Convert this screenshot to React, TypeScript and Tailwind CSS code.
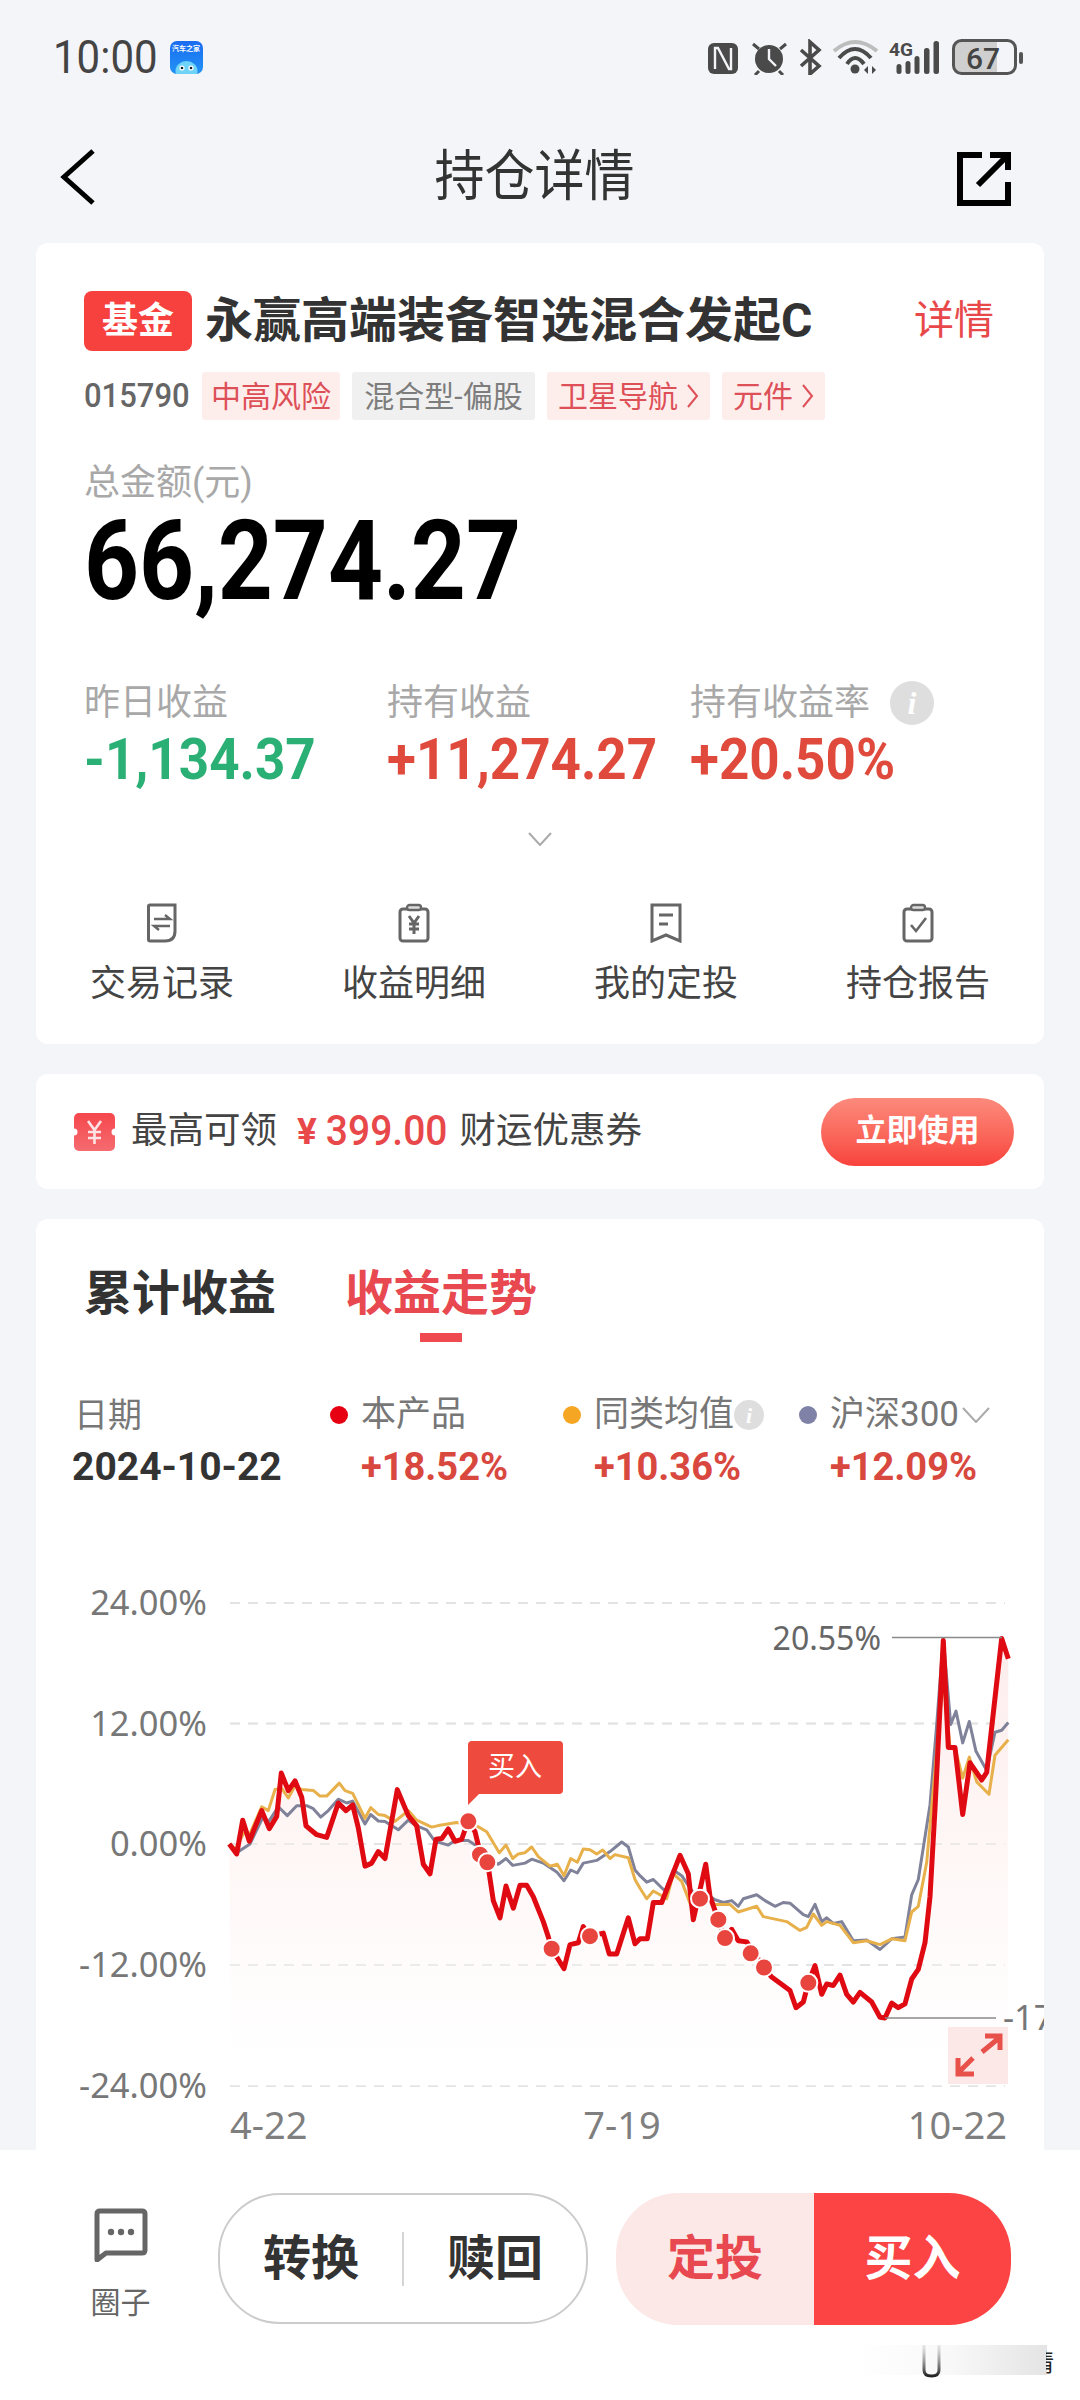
const sx = (x: number) => 200 + x / 3;
const sy = (y: number) => 1560 + y / 2.6133;

// 坐标取自参考图放大后的读数,右半段加 1320 接上
const toPoints = (left: number[], right: number[]) => {
  const all = [...left];
  for (let i = 0; i < right.length; i += 2) all.push(right[i] + 1320, right[i + 1]);
  const out: string[] = [];
  for (let i = 0; i < all.length; i += 2) out.push(`${sx(all[i]).toFixed(1)},${sy(all[i + 1]).toFixed(1)}`);
  return out.join(" ");
};

const redLine = toPoints(
  [88,742,110,768,128,680,148,735,185,655,208,702,230,670,244,557,265,603,285,577,305,620,318,695,350,718,380,725,415,635,438,655,458,640,475,700,495,800,515,792,535,762,555,780,592,600,625,668,650,695,670,795,690,820,708,730,725,728,745,703,765,735,785,730,793,710,805,683,825,710,835,745,862,790,868,820,880,890,900,935,918,852,940,910,960,850,980,850,1000,880,1030,945,1045,985,1055,1016,1092,1068,1110,1005,1135,1000,1150,958,1170,983,1210,975,1228,1030,1250,1030,1285,935,1305,1003,1320,990],
  [22,990,40,895,65,895,120,772,145,820,160,940,197,795,210,880,235,940,255,988,275,965,295,995,320,998,372,1065,395,1090,450,1125,468,1170,490,1155,505,1105,525,1060,545,1135,560,1108,580,1112,600,1085,620,1135,640,1155,660,1130,695,1155,720,1195,735,1197,755,1158,775,1170,795,1160,815,1095,835,1070,855,1000,870,880,885,650,910,210,925,490,945,490,968,665,990,530,1025,575,1040,555,1060,400,1085,205,1105,258],
);
const orangeLine = toPoints(
  [88,742,108,755,130,715,150,715,185,645,205,655,225,600,245,597,265,622,285,590,305,600,340,602,360,617,380,617,418,583,435,603,458,610,495,675,512,647,535,665,555,668,585,683,625,655,650,680,695,698,715,694,770,686,830,695,860,710,898,765,918,745,938,780,955,768,975,765,995,750,1015,775,1050,800,1072,795,1092,825,1112,780,1132,790,1150,755,1170,757,1190,768,1208,758,1230,780,1245,770,1285,778,1305,835,1320,858],
  [20,885,40,865,60,875,80,885,100,820,125,840,160,920,195,880,225,900,270,900,295,920,350,905,370,932,440,945,480,968,500,960,520,925,545,955,560,945,600,955,640,1000,680,995,720,1005,755,990,795,995,815,920,835,905,860,790,885,550,910,310,930,490,945,490,968,570,988,515,1010,580,1047,612,1065,510,1105,470],
);
const greyLine = toPoints(
  [88,745,110,765,150,742,190,670,205,685,235,645,262,668,290,642,320,642,340,650,362,672,385,655,415,625,440,635,458,630,495,690,512,665,535,682,555,683,595,705,625,680,650,695,680,705,705,735,745,745,765,733,805,733,835,750,862,775,895,795,918,780,938,798,975,792,995,782,1030,792,1070,815,1092,838,1112,810,1132,818,1150,792,1190,785,1230,762,1265,737,1285,750,1305,810,1320,825],
  [20,842,40,835,75,865,100,810,125,825,160,870,195,870,225,888,250,895,275,890,295,905,310,885,350,875,375,890,405,905,430,895,450,897,490,927,505,932,525,900,545,945,560,935,580,950,605,945,640,995,680,993,720,1018,755,990,795,985,815,875,835,835,870,640,890,430,910,205,932,430,948,395,968,478,988,422,1008,500,1040,550,1065,450,1085,445,1105,425],
);
const buyDots = [[805,683],[840,770],[862,790],[1055,1016],[1170,983],[1500,885],[1555,940],[1575,988],[1652,1028],[1692,1065],[1825,1105]];
const grid = [
  { y: 1603, label: "24.00%" },
  { y: 1723.5, label: "12.00%" },
  { y: 1844, label: "0.00%" },
  { y: 1965, label: "-12.00%" },
  { y: 2086, label: "-24.00%" },
];

function StatusIcons() {
  return (
    <svg width="315" height="36" viewBox="0 0 315 36" fill="none">
      <rect x="0" y="4" width="30" height="31" rx="6" fill="#4a4a4a" />
      <path d="M7 30V9h3l11 21h2V9" stroke="#f4f5f9" strokeWidth="2.4" />
      <circle cx="61" cy="20" r="14" fill="#4a4a4a" />
      <path d="M61 10v10l7 7" stroke="#f4f5f9" strokeWidth="2.4" />
      <path d="M45 5l6 5M78 5l-6 5M47 36l4-4M75 36l-4-4" stroke="#4a4a4a" strokeWidth="3" />
      <path d="M93 11l18 16-9 8V3l9 8-18 16" stroke="#4a4a4a" strokeWidth="3.6" />
      <path d="M126 12Q147-6 169 12" stroke="#bdbdbd" strokeWidth="4" />
      <path d="M131 19Q147 1 163 19" stroke="#4a4a4a" strokeWidth="4" />
      <path d="M139 25Q147 13 156 25" stroke="#4a4a4a" strokeWidth="4" />
      <circle cx="147" cy="30" r="4.5" fill="#4a4a4a" />
      <path d="M160 27v8l-4-4zM164 35v-8l4 4z" fill="#4a4a4a" />
      <text x="181" y="17" fontSize="18" fontWeight="700" fill="#4a4a4a" textLength="24" lengthAdjust="spacingAndGlyphs" fontFamily="Roboto, sans-serif">4G</text>
      <rect x="188.5" y="25" width="5" height="10" rx="2.5" fill="#4a4a4a" />
      <rect x="197.5" y="22" width="5" height="13" rx="2.5" fill="#4a4a4a" />
      <rect x="206.5" y="17" width="5" height="18" rx="2.5" fill="#4a4a4a" />
      <rect x="216" y="9" width="5.5" height="26" rx="2.5" fill="#4a4a4a" />
      <rect x="225.5" y="2" width="5.5" height="33" rx="2.5" fill="#4a4a4a" />
      <path d="M253 3h36v30h-36a6 6 0 0 1-6-6V9a6 6 0 0 1 6-6z" fill="#cfcfcf" />
      <rect x="245.5" y="1.5" width="62" height="33" rx="8" stroke="#555" strokeWidth="3" />
      <text x="275" y="30" textAnchor="middle" fontSize="30" fontWeight="500" fill="#444" fontFamily="Roboto, sans-serif">67</text>
      <rect x="311" y="13" width="4" height="12" rx="2" fill="#555" />
    </svg>
  );
}

function AppIcon() {
  return (
    <div className="w-[33px] h-[33px] rounded-[7px] bg-gradient-to-b from-[#1b6cf0] to-[#2492f5] overflow-hidden flex flex-col items-center">
      <span className="mt-[4px] text-[7px] leading-[9px] font-bold text-white whitespace-nowrap">汽车之家</span>
      <svg width="33" height="20" viewBox="0 0 33 20">
        <ellipse cx="16.5" cy="17" rx="11" ry="10" fill="#6fd3f8" />
        <circle cx="12" cy="14" r="2.6" fill="#fff" />
        <circle cx="21" cy="14" r="2.6" fill="#fff" />
        <circle cx="12" cy="14" r="1.3" fill="#123" />
        <circle cx="21" cy="14" r="1.3" fill="#123" />
      </svg>
    </div>
  );
}

function Tag({ text, width, grey, arrow }: { text: string; width: string; grey?: boolean; arrow?: boolean }) {
  return (
    <div className={`${width} h-[48px] flex items-center justify-center gap-[8px] rounded-[3px] text-[30px] whitespace-nowrap ${grey ? "bg-[#f0f0f0] text-[#7d7d7d]" : "bg-[#fdeeec] text-[#dd5058]"}`}>
      <span>{text}</span>
      {arrow && (
        <svg width="13" height="26" viewBox="0 0 13 26" fill="none">
          <path d="M2 2l9 11-9 11" stroke="#dd5058" strokeWidth="2" />
        </svg>
      )}
    </div>
  );
}

function Stat({ label, value, color, info }: { label: string; value: string; color: string; info?: boolean }) {
  return (
    <div>
      <div className="h-[44px] flex items-center text-[36px] text-[#a8a8a8]">
        {label}
        {info && (
          <span className="ml-[20px] w-[44px] h-[44px] rounded-full bg-[#dedede] flex items-center justify-center text-white text-[32px] font-bold italic font-[Liberation_Serif,serif]">i</span>
        )}
      </div>
      <div className={`mt-[6px] h-[56px] leading-[56px] text-[53px] font-bold whitespace-nowrap scale-y-110 origin-center ${color}`}>{value}</div>
    </div>
  );
}

function ActionIcon({ kind }: { kind: number }) {
  return (
    <svg width="32" height="40" viewBox="0 0 32 40" fill="none" stroke="#666" strokeWidth="3">
      {kind === 0 && (
        <>
          <path d="M4 2h25v26q0 10-10 10H4q-1.500 0-1.500-1.500V3.500Q2.500 2 4 2z" />
          <path d="M8 16h16l-5-4M24 23H8l5 4" strokeWidth="2.4" />
        </>
      )}
      {kind === 1 && (
        <>
          <rect x="2" y="6" width="28" height="32" rx="3" />
          <rect x="9" y="2" width="14" height="5" rx="2.500" fill="#ddd" strokeWidth="2.400" />
          <path d="M11 13l5 7 5-7M16 20v11M11 21h10M11 26h10" strokeWidth="3" />
        </>
      )}
      {kind === 2 && (
        <>
          <path d="M2 2h28v36l-14-6-14 6z" />
          <path d="M9 12h14M9 21h9" />
        </>
      )}
      {kind === 3 && (
        <>
          <rect x="2" y="6" width="28" height="32" rx="3" />
          <rect x="9" y="2" width="14" height="5" rx="2.500" fill="#ddd" strokeWidth="2.400" />
          <path d="M9 22l5 6 10-13" strokeWidth="2.600" />
        </>
      )}
    </svg>
  );
}

function LegendCol({ dot, name, value, width, extra }: { dot: string; name: string; value: string; width: string; extra?: React.ReactNode }) {
  return (
    <div className={width}>
      <div className="h-[40px] flex items-center text-[35px] text-[#777] whitespace-nowrap">
        <span className={`w-[18px] h-[18px] rounded-full mr-[13px] ${dot}`} />
        {name}
        {extra}
      </div>
      <div className="mt-[12px] h-[40px] leading-[40px] pl-[31px] text-[38px] font-bold text-[#d9483e]">{value}</div>
    </div>
  );
}

function Chart() {
  return (
    <svg className="block shrink-0" width="1008" height="590" viewBox="36 1560 1008 590" fill="none" fontFamily="'Noto Sans', sans-serif">
      <defs>
        <linearGradient id="area" gradientUnits="userSpaceOnUse" x1="0" y1="1620" x2="0" y2="2060">
          <stop offset="0" stopColor="#fce8e8" />
          <stop offset="0.45" stopColor="#fef4f3" />
          <stop offset="1" stopColor="#ffffff" />
        </linearGradient>
      </defs>
      {grid.map((g) => (
        <g key={g.label}>
          <line x1="230" x2="1005" y1={g.y} y2={g.y} stroke="#e3e3e3" strokeWidth="2" strokeDasharray="10 8" />
          <text x="207" y={g.y + 12} textAnchor="end" fontSize="34.500" fill="#777">{g.label}</text>
        </g>
      ))}
      <polygon points={`231,2086 ${redLine} 1008,2086`} fill="url(#area)" opacity="0.85" />
      {grid.map((g) => (
        <line key={g.y} x1="230" x2="1005" y1={g.y} y2={g.y} stroke="#e3e3e3" strokeWidth="2" strokeDasharray="10 8" opacity="0.6" />
      ))}
      <polyline points={greyLine} stroke="#7f8299" strokeWidth="3" strokeLinejoin="round" />
      <polyline points={orangeLine} stroke="#e8b04a" strokeWidth="3" strokeLinejoin="round" />
      <polyline points={redLine} stroke="#df0a12" strokeWidth="5" strokeLinejoin="round" />
      <line x1="892" x2="1002" y1="1637.5" y2="1637.5" stroke="#8a8a8a" strokeWidth="1.5" />
      <line x1="885" x2="996" y1="2018" y2="2018" stroke="#8a8a8a" strokeWidth="1.5" />
      <text x="881" y="1650" textAnchor="end" fontSize="32" fill="#666">20.55%</text>
      <text x="1003" y="2030" fontSize="34.500" fill="#777">-17.30%</text>
      {buyDots.map(([x, y]) => (
        <circle key={x} cx={sx(x)} cy={sy(y)} r="9" fill="#e8453f" stroke="#fff" strokeWidth="2" />
      ))}
      <path d="M472 1741h87a4 4 0 0 1 4 4v45a4 4 0 0 1-4 4h-80l-11 11v-60a4 4 0 0 1 4-4z" fill="#ef4a3e" />
      <text x="515" y="1776" textAnchor="middle" fontSize="27" fill="#fff" fontFamily="'Noto Sans CJK SC', sans-serif">买入</text>
      <rect x="948" y="2027" width="60" height="57" fill="#fde8e8" />
      <path d="M982 2052l17-14M985 2036h15v14M973 2058l-15 15M958 2058v16h16" stroke="#e8504a" strokeWidth="5" />
      <g fill="#7f7f7f" fontSize="38">
        <text x="230" y="2139">4-22</text>
        <text x="622" textAnchor="middle" y="2139">7-19</text>
        <text x="1007" textAnchor="end" y="2139">10-22</text>
      </g>
    </svg>
  );
}

export default function App() {
  return (
    <div className="relative w-[1080px] h-[2400px] overflow-hidden flex flex-col bg-[#f4f5f9] font-[Roboto,'Noto_Sans_CJK_SC',sans-serif] text-[#333]">
      {/* 状态栏 */}
      <div className="h-[114px] shrink-0 flex items-center justify-between pl-[53px] pr-[57px]">
        <div className="flex items-center gap-[12px]">
          <span className="text-[42px] text-[#444] scale-y-110">10:00</span>
          <AppIcon />
        </div>
        <StatusIcons />
      </div>

      {/* 导航 */}
      <div className="h-[119px] shrink-0 flex items-center justify-between pl-[60px] pr-[69px]">
        <svg className="mt-[7px]" width="36" height="58" viewBox="0 0 36 58" fill="none">
          <path d="M33 3L4 29l29 26" stroke="#000" strokeWidth="5" />
        </svg>
        <span className="ml-[16px] mt-[5px] text-[50px] text-[#333] scale-y-110">持仓详情</span>
        <svg className="mt-[10px]" width="54" height="54" viewBox="0 0 54 54" fill="none" stroke="#000" strokeWidth="6">
          <path d="M25 3H3v48h48V30" />
          <path d="M33 3h18v15M21 33L49 5" />
        </svg>
      </div>

      <div className="flex-1 min-h-0 flex flex-col px-[36px] pt-[10px]">
        {/* 持仓卡片 */}
        <div className="shrink-0 h-[801px] rounded-[12px] bg-white pt-[48px]">
          <div className="px-[48px]">
            <div className="h-[60px] flex items-center">
              <div className="w-[108px] h-[60px] rounded-[8px] bg-[#f7413f] flex items-center justify-center text-white text-[36px] font-bold">基金</div>
              <div className="ml-[13px] text-[48px] font-bold text-[#333] whitespace-nowrap">永赢高端装备智选混合发起C</div>
              <div className="ml-auto mr-[2px] text-[40px] text-[#e8484a]">详情</div>
            </div>
            <div className="mt-[21px] flex items-center">
              <span className="w-[118px] text-[31px] font-medium text-[#666] scale-y-110 origin-left">015790</span>
              <div className="flex gap-[12px]">
                <Tag width="w-[138px]" text="中高风险" />
                <Tag width="w-[183px]" text="混合型-偏股" grey />
                <Tag width="w-[163px]" text="卫星导航" arrow />
                <Tag width="w-[103px]" text="元件" arrow />
              </div>
            </div>
            <div className="mt-[41px] h-[44px] leading-[44px] text-[36px] text-[#a8a8a8]">总金额(元)</div>
            <div className="mt-[11px] h-[90px] leading-[90px] text-[96px] font-bold text-black scale-y-115 origin-center">66,274.27</div>
            <div className="mt-[75px] grid grid-cols-[303px_303px_1fr]">
              <Stat label="昨日收益" value="-1,134.37" color="text-[#2aaf75]" />
              <Stat label="持有收益" value="+11,274.27" color="text-[#e04a3c]" />
              <Stat label="持有收益率" value="+20.50%" color="text-[#e04a3c]" info />
            </div>
          </div>
          <div className="mt-[45px] flex justify-center">
            <svg width="24" height="14" viewBox="0 0 24 14" fill="none">
              <path d="M1 1l11 12L23 1" stroke="#aaa" strokeWidth="2" />
            </svg>
          </div>
          <div className="mt-[57px] grid grid-cols-4">
            {["交易记录", "收益明细", "我的定投", "持仓报告"].map((t, i) => (
              <div key={t} className="flex flex-col items-center">
                <ActionIcon kind={i} />
                <span className="mt-[21px] h-[40px] leading-[40px] text-[36px] text-[#444]">{t}</span>
              </div>
            ))}
          </div>
        </div>

        {/* 优惠券 */}
        <div className="mt-[30px] shrink-0 h-[115px] rounded-[12px] bg-white pl-[38px] pr-[30px] flex items-center">
          <svg width="41" height="38" viewBox="0 0 41 38">
            <defs>
              <linearGradient id="ticket" x1="0" y1="0" x2="0" y2="1">
                <stop offset="0" stopColor="#f5474c" />
                <stop offset="1" stopColor="#f56b70" />
              </linearGradient>
            </defs>
            <rect width="41" height="38" rx="5" fill="url(#ticket)" />
            <circle cx="0" cy="19" r="3.5" fill="#fff" />
            <circle cx="41" cy="19" r="3.5" fill="#fff" />
            <path d="M14 8l6.500 9 6.500-9M20.500 17v14M14 19h13M14 25h13" stroke="#fde4e4" strokeWidth="2.600" fill="none" />
          </svg>
          <span className="ml-[16px] text-[36.500px] text-[#444]">最高可领</span>
          <span className="ml-[20px] text-[37px] font-bold text-[#e8484a]">¥</span>
          <span className="ml-[9px] text-[39px] font-medium text-[#e8484a] scale-y-110">399.00</span>
          <span className="ml-[12px] text-[36.500px] text-[#444]">财运优惠券</span>
          <div className="ml-auto w-[193px] h-[68px] rounded-full bg-gradient-to-b from-[#fb8a7c] to-[#f8413c] flex items-center justify-center text-white text-[31px] font-bold">立即使用</div>
        </div>

        {/* 收益走势 */}
        <div className="mt-[30px] flex-1 min-h-0 overflow-hidden rounded-t-[12px] bg-white pt-[50px]">
          <div className="pl-[48px] flex gap-[69px]">
            <span className="h-[50px] leading-[50px] text-[48px] font-bold text-[#333]">累计收益</span>
            <div className="flex flex-col items-center">
              <span className="h-[50px] leading-[50px] text-[48px] font-bold text-[#e8484f]">收益走势</span>
              <span className="mt-[14px] w-[42px] h-[9px] bg-[#ee4a50]" />
            </div>
          </div>
          <div className="mt-[53px] pl-[38px] flex">
            <div className="w-[256px]">
              <div className="h-[40px] leading-[40px] text-[34px] text-[#777]">日期</div>
              <div className="mt-[12px] h-[40px] leading-[40px] text-[39px] font-bold text-[#333] -ml-[2px] whitespace-nowrap">2024-10-22</div>
            </div>
            <LegendCol width="w-[233px]" dot="bg-[#e60012]" name="本产品" value="+18.52%" />
            <LegendCol
              width="w-[236px]"
              dot="bg-[#f5a623]"
              name="同类均值"
              value="+10.36%"
              extra={<span className="w-[30px] h-[30px] rounded-full bg-[#dedede] flex items-center justify-center text-white text-[22px] font-bold italic font-[Liberation_Serif,serif]">i</span>}
            />
            <LegendCol
              width="w-[200px]"
              dot="bg-[#7f82a6]"
              name="沪深300"
              value="+12.09%"
              extra={
                <svg className="ml-[3px]" width="28" height="16" viewBox="0 0 28 16" fill="none">
                  <path d="M1 1l13 14L27 1" stroke="#aaa" strokeWidth="2" />
                </svg>
              }
            />
          </div>
          <div className="mt-[73px]">
            <Chart />
          </div>
        </div>
      </div>

      {/* 底部操作栏 */}
      <div className="relative h-[250px] shrink-0 bg-white pt-[43px] pl-[90px] flex items-start">
        <div className="w-[61px] flex flex-col items-center mt-[15px]">
          <svg width="54" height="54" viewBox="0 0 54 54" fill="none">
            <path d="M3 52V6q0-3 3-3h42q3 0 3 3v36q0 3-3 3H12z" stroke="#666" strokeWidth="5" strokeLinejoin="round" />
            <circle cx="17" cy="24" r="3.2" fill="#666" />
            <circle cx="27" cy="24" r="3.2" fill="#666" />
            <circle cx="37" cy="24" r="3.2" fill="#666" />
          </svg>
          <span className="mt-[23px] text-[30px] leading-[36px] text-[#666] whitespace-nowrap">圈子</span>
        </div>
        <div className="ml-[67px] w-[370px] h-[131px] rounded-[62px] border-2 border-[#cccccc] flex items-center text-[48px] font-bold text-[#333]">
          <span className="flex-1 text-center">转换</span>
          <span className="w-[2px] h-[54px] bg-[#d5d5d5]" />
          <span className="flex-1 text-center">赎回</span>
        </div>
        <div className="ml-[28px] w-[395px] h-[132px] rounded-[62px] overflow-hidden flex text-[48px] font-bold">
          <span className="w-[198px] bg-[#fce8e7] text-[#e8484f] flex items-center justify-center">定投</span>
          <span className="flex-1 bg-[#fc4444] text-white flex items-center justify-center">买入</span>
        </div>
        {/* 右下角截图残留的水印 */}
        <div className="absolute left-[857px] top-[195px] w-[190px] h-[30px] bg-gradient-to-r from-white via-[#f8f8f8] to-[#e4e4e4]" />
        <svg className="absolute left-[921px] top-[195px]" width="21" height="33" viewBox="0 0 21 33" fill="none">
          <defs>
            <linearGradient id="smear" x1="0" y1="0" x2="0" y2="1">
              <stop offset="0" stopColor="#bbb" stopOpacity="0.3" />
              <stop offset="1" stopColor="#222" />
            </linearGradient>
          </defs>
          <path d="M3 0v25q0 6 7.500 6t7.500-6V0" stroke="url(#smear)" strokeWidth="3" />
        </svg>
        <div className="absolute left-[1046px] top-[200px] w-[8px] h-[26px] overflow-hidden">
          <span className="absolute right-0 top-0 text-[24px] leading-[26px] text-[#222] whitespace-nowrap">情</span>
        </div>
      </div>
    </div>
  );
}
